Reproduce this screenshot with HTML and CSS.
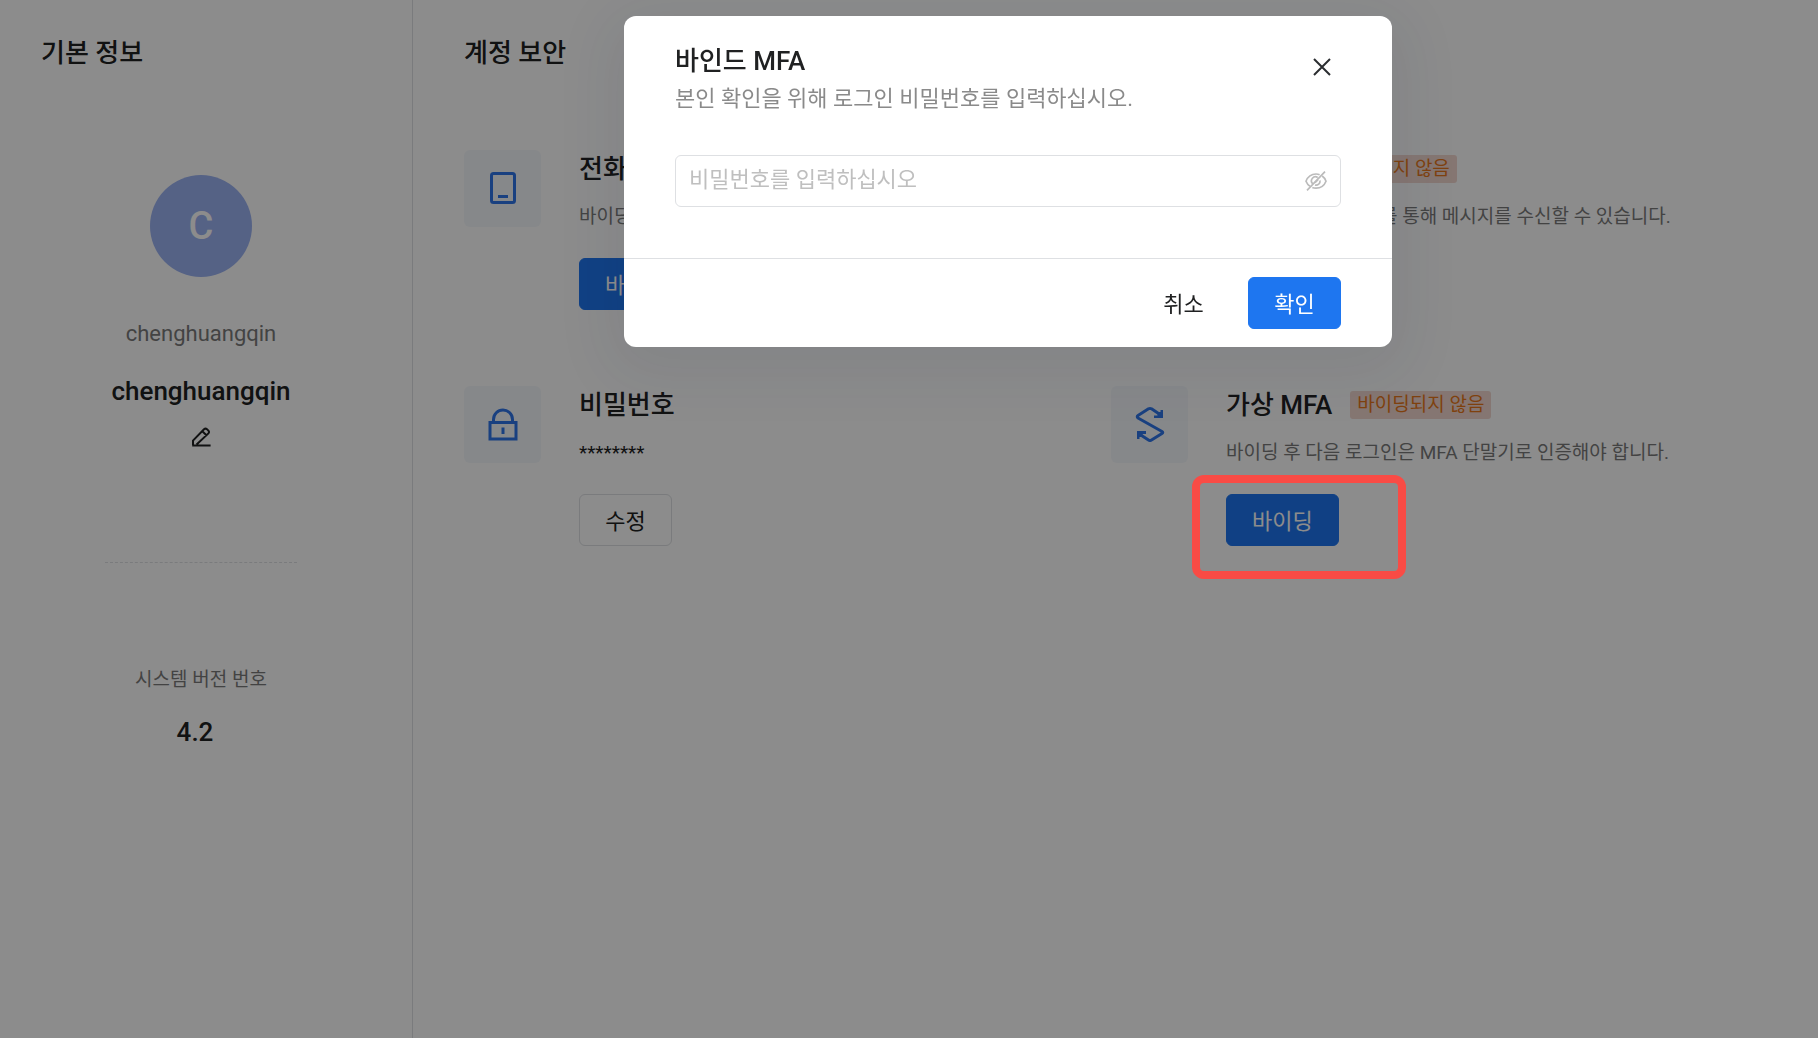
FILE: index.html
```html
<!DOCTYPE html>
<html lang="ko">
<head>
<meta charset="utf-8">
<meta name="viewport" content="width=device-width, initial-scale=1">
<title>계정 보안</title>
<link rel="stylesheet" href="styles.css">
</head>
<body>
<div class="layout">
  <aside class="profile">
    <h2 class="section-title">기본 정보</h2>
    <div class="profile-body">
      <div class="avatar">C</div>
      <p class="account">chenghuangqin</p>
      <p class="name">chenghuangqin</p>
      <button class="edit" type="button" aria-label="이름 수정">
        <svg viewBox="0 0 20 20" width="20" height="20" fill="none" stroke="currentColor" stroke-width="2">
          <path d="M1.200 18.400H19.600M2 18V13.600L13 2.300Q14.500 1 16 2.300L17.400 3.600Q18.600 5 17.400 6.400L5.600 17.600M11.600 4.600L15.400 8.200"/>
        </svg>
      </button>
      <hr class="divider">
      <p class="version-label">시스템 버전 번호</p>
      <p class="version">4.2</p>
    </div>
  </aside>

  <main class="security">
    <h2 class="section-title">계정 보안</h2>
    <div class="grid">
      <section class="item">
        <div class="tile">
          <svg viewBox="0 0 34 34" width="34" height="34" fill="none" stroke="currentColor" stroke-width="3">
            <rect x="5.500" y="2.500" width="23" height="29" rx="2"/><path d="M12 25.500H22"/>
          </svg>
        </div>
        <div class="info">
          <h3 class="item-title">전화번호 <span class="badge">바이딩되지 않음</span></h3>
          <p class="desc">바이딩 후 전화를 통해 메시지를 수신할 수 있습니다.</p>
          <button class="btn primary" type="button">바이딩</button>
        </div>
      </section>
      <section class="item">
        <div class="tile">
          <svg viewBox="0 0 34 34" width="34" height="34" fill="none" stroke="currentColor" stroke-width="3">
            <rect x="3.500" y="6.500" width="27" height="22" rx="1"/><path d="M4 8L17 18L30 8"/>
          </svg>
        </div>
        <div class="info">
          <h3 class="item-title">이메일 <span class="badge">바이딩되지 않음</span></h3>
          <p class="desc">바이딩 후 메일 주소를 통해 메시지를 수신할 수 있습니다.</p>
          <button class="btn primary" type="button">바이딩</button>
        </div>
      </section>
      <section class="item">
        <div class="tile">
          <svg viewBox="0 0 34 34" width="34" height="34" fill="none" stroke="currentColor" stroke-width="3">
            <path d="M4 15.500H30V32H4ZM7.500 15V12.500A9.500 9.500 0 0 1 26.500 12.500V15M17 20.500V27"/>
          </svg>
        </div>
        <div class="info">
          <h3 class="item-title">비밀번호</h3>
          <p class="desc secret">********</p>
          <button class="btn" type="button">수정</button>
        </div>
      </section>
      <section class="item">
        <div class="tile">
          <svg viewBox="0 0 34 36" width="34" height="36" fill="none" stroke="currentColor" stroke-width="3" stroke-linejoin="round">
            <path d="M27 8.500L18.500 2.800Q17 2 15.500 2.800L5 9.500Q3.500 10.500 5 12L29 25.500Q30.500 26.500 29 27.500L18.500 34Q17 35 15.500 34L7 28.500"/>
            <path d="M30 4V12H21V9.500H24.500V6H27.500V4ZM4 33V25H13V28H9.500V31H6.500V33Z" fill="currentColor" stroke="none"/>
          </svg>
        </div>
        <div class="info">
          <h3 class="item-title">가상 MFA <span class="badge">바이딩되지 않음</span></h3>
          <p class="desc">바이딩 후 다음 로그인은 MFA 단말기로 인증해야 합니다.</p>
          <div class="marked">
            <button class="btn primary" type="button">바이딩</button>
            <span class="marker"></span>
          </div>
        </div>
      </section>
    </div>
  </main>
</div>

<div class="mask">
  <form class="dialog" role="dialog" aria-modal="true" aria-labelledby="dialog-title">
    <div class="dialog-body">
      <header class="dialog-head">
        <div>
          <h2 class="dialog-title" id="dialog-title">바인드 MFA</h2>
          <label class="dialog-sub" for="password">본인 확인을 위해 로그인 비밀번호를 입력하십시오.</label>
        </div>
        <button class="close" type="button" aria-label="닫기">
          <svg viewBox="0 0 18 18" width="18" height="18" fill="none" stroke="currentColor" stroke-width="2">
            <path d="M1 1L17 17M17 1L1 17"/>
          </svg>
        </button>
      </header>
      <div class="field">
        <input class="field-input" id="password" type="password" placeholder="비밀번호를 입력하십시오">
        <button class="reveal" type="button" aria-label="비밀번호 표시">
          <svg viewBox="0 0 22 20" width="22" height="20" fill="none" stroke="currentColor" stroke-width="1.700">
            <path d="M5 15.200C3.200 14 1.700 12 1 10.200C2.600 6.200 6.300 3 11 3C12.300 3 13.500 3.200 14.600 3.700M17.200 5C19 6.300 20.400 8.200 21 10.200C19.400 14.200 15.700 17.200 11 17.200C9.600 17.200 8.400 17 7.300 16.500"/>
            <path d="M7.600 12.600A4 4 0 0 1 12.700 6.500M15 9.500A4 4 0 0 1 10 14M2 19.300L20 .7"/>
            <path d="M10 11.600L13 8.600"/>
          </svg>
        </button>
      </div>
    </div>
    <footer class="dialog-foot">
      <button class="btn text" type="button">취소</button>
      <button class="btn primary" type="submit">확인</button>
    </footer>
  </form>
</div>
</body>
</html>
```
FILE: styles.css
```css
* {
  box-sizing: border-box;
}

body {
  margin: 0;
  color: #202122;
  background: #fff;
  font-family: Roboto, "Noto Sans CJK KR", sans-serif;
  font-size: 22px;
}

h2, h3, p {
  margin: 0;
}

button, input {
  font: inherit;
}

button {
  cursor: pointer;
}

.layout {
  display: flex;
  min-height: 100vh;
}

.section-title {
  font-size: 26px;
  font-weight: 500;
  line-height: 40px;
}

/* Profile column */
.profile {
  flex: 0 0 413px;
  padding: 33px 51px 32px 41px;
  border-right: 1px solid #dee0e3;
}

.profile-body {
  display: flex;
  flex-direction: column;
  align-items: center;
  padding-top: 102px;
}

.avatar {
  display: grid;
  place-items: center;
  width: 102px;
  height: 102px;
  border-radius: 50%;
  color: #fff;
  background: #9bb2f2;
  font-size: 38px;
  font-weight: 500;
}

.account {
  margin-top: 39px;
  color: #7b7b7b;
  line-height: 36px;
}

.name {
  margin-top: 19px;
  font-size: 26px;
  font-weight: 500;
  line-height: 40px;
}

.edit {
  display: flex;
  margin-top: 16px;
  padding: 0;
  border: 0;
  color: inherit;
  background: none;
}

.divider {
  width: 192px;
  margin: 115px 0 103px;
  border: 0;
  border-top: 1px dashed #dee0e3;
}

.version-label {
  color: #7b7b7b;
  font-size: 19px;
  line-height: 28px;
}

.version {
  margin-top: 18px;
  padding-right: 12px;
  font-size: 26px;
  font-weight: 500;
  line-height: 40px;
}

/* Security settings */
.security {
  flex: 1;
  min-width: 0;
  padding: 33px 60px 32px 51px;
}

.grid {
  display: grid;
  grid-template-columns: 1fr 1fr;
  row-gap: 76px;
  margin-top: 77px;
}

.item {
  display: flex;
  align-items: flex-start;
  gap: 38px;
}

.tile {
  display: grid;
  flex: none;
  place-items: center;
  width: 77px;
  height: 77px;
  padding-bottom: 2px;
  border-radius: 6px;
  color: #2f76ea;
  background: #f5f8fc;
}

.info {
  white-space: nowrap;
}

.item-title {
  display: flex;
  align-items: center;
  gap: 18px;
  font-size: 26px;
  font-weight: 500;
  line-height: 38px;
}

.badge {
  padding: 0 7px;
  border-radius: 3px;
  color: #e8771a;
  background: #f2d8d0;
  font-size: 19px;
  font-weight: 400;
  line-height: 28px;
}

.desc {
  margin: 15px 0 27px;
  color: #7b7b7b;
  font-size: 19px;
  line-height: 28px;
}

.secret {
  color: #202122;
}

.btn {
  min-width: 93px;
  height: 52px;
  padding: 3px 25px 0;
  border: 1px solid #dee0e3;
  border-radius: 6px;
  color: #202122;
  background: #fff;
  line-height: 36px;
}

.btn.primary {
  border-color: #1e76f0;
  color: #fff;
  background: #1e76f0;
}

.btn.text {
  border-color: transparent;
  background: none;
}

.marked {
  position: relative;
  width: max-content;
}

.marker {
  position: absolute;
  z-index: 20;
  top: -19px;
  left: -34px;
  width: 214px;
  height: 104px;
  border: 8px solid #f94b45;
  border-radius: 12px;
  pointer-events: none;
}

/* Dialog */
.mask {
  position: fixed;
  z-index: 10;
  inset: 0;
  display: flex;
  align-items: flex-start;
  justify-content: center;
  padding: 16px 0 0 198px;
  background: rgba(0, 0, 0, .45);
}

.dialog {
  width: 768px;
  border-radius: 12px;
  background: #fff;
  box-shadow: 0 14px 64px 20px rgba(31, 35, 60, .08);
}

.dialog-body {
  padding: 25px 51px 51px;
}

.dialog-head {
  display: flex;
  align-items: flex-start;
  justify-content: space-between;
}

.dialog-title {
  font-size: 26px;
  font-weight: 500;
  line-height: 40px;
}

.dialog-sub {
  display: block;
  color: #8a8a8a;
  line-height: 36px;
}

.close {
  display: grid;
  place-items: center;
  width: 38px;
  height: 52px;
  padding: 0;
  border: 0;
  color: #2b2d30;
  background: none;
}

.field {
  display: flex;
  align-items: center;
  height: 52px;
  margin-top: 38px;
  padding: 0 13px;
  border: 1px solid #dee0e3;
  border-radius: 6px;
}

.field-input {
  flex: 1;
  min-width: 0;
  padding: 0 0 3px;
  border: 0;
  outline: 0;
  color: inherit;
  background: none;
}

.field-input::placeholder {
  color: #bfbfbf;
}

.reveal {
  display: flex;
  padding: 0;
  border: 0;
  color: #bbb;
  background: none;
}

.dialog-foot {
  display: flex;
  justify-content: flex-end;
  gap: 18px;
  padding: 18px 51px;
  border-top: 1px solid #dee0e3;
}
```
